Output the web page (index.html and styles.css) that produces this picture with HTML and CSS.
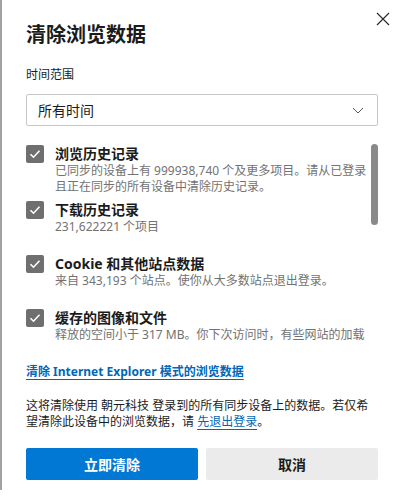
FILE: index.html
```html
<!DOCTYPE html>
<html lang="zh-CN">
<head>
<meta charset="utf-8">
<link rel="stylesheet" href="styles.css">
</head>
<body>
<div class="dialog">
  <button class="close" aria-label="关闭">
    <svg width="14" height="14" viewBox="0 0 14 14"><path d="M1 1L13 13M13 1L1 13" stroke="#2b2b2b" stroke-width="1.2" fill="none"/></svg>
  </button>
  <h1 class="title">清除浏览数据</h1>
  <div class="field-label">时间范围</div>
  <div class="select">
    <span>所有时间</span>
    <svg class="chev" width="12" height="7" viewBox="0 0 12 7"><path d="M1 1L6 6L11 1" stroke="#555" stroke-width="1" fill="none"/></svg>
  </div>
  <div class="scroll">
    <div class="item">
      <span class="cb"><svg width="12" height="10" viewBox="0 0 12 10"><path d="M1.5 5.2L4.5 8.2L10.5 1.8" stroke="#fff" stroke-width="1.6" fill="none"/></svg></span>
      <div class="item-text">
        <div class="item-title">浏览历史记录</div>
        <div class="item-desc">已同步的设备上有 999938,740 个及更多项目。请从已登录且正在同步的所有设备中清除历史记录。</div>
      </div>
    </div>
    <div class="item">
      <span class="cb"><svg width="12" height="10" viewBox="0 0 12 10"><path d="M1.5 5.2L4.5 8.2L10.5 1.8" stroke="#fff" stroke-width="1.6" fill="none"/></svg></span>
      <div class="item-text">
        <div class="item-title">下载历史记录</div>
        <div class="item-desc">231,622221 个项目</div>
      </div>
    </div>
    <div class="item">
      <span class="cb"><svg width="12" height="10" viewBox="0 0 12 10"><path d="M1.5 5.2L4.5 8.2L10.5 1.8" stroke="#fff" stroke-width="1.6" fill="none"/></svg></span>
      <div class="item-text">
        <div class="item-title">Cookie 和其他站点数据</div>
        <div class="item-desc">来自 343,193 个站点。使你从大多数站点退出登录。</div>
      </div>
    </div>
    <div class="item">
      <span class="cb"><svg width="12" height="10" viewBox="0 0 12 10"><path d="M1.5 5.2L4.5 8.2L10.5 1.8" stroke="#fff" stroke-width="1.6" fill="none"/></svg></span>
      <div class="item-text">
        <div class="item-title">缓存的图像和文件</div>
        <div class="item-desc">释放的空间小于 317 MB。你下次访问时，有些网站的加载时间可能会更慢。</div>
      </div>
    </div>
    <div class="scrollbar"></div>
  </div>
  <a class="ie-link" href="#">清除 Internet Explorer 模式的浏览数据</a>
  <p class="note">这将清除使用 朝元科技 登录到的所有同步设备上的数据。若仅希望清除此设备中的浏览数据，请 <a href="#">先退出登录</a>。</p>
  <div class="actions">
    <button class="btn primary">立即清除</button>
    <button class="btn secondary">取消</button>
  </div>
</div>
</body>
</html>
```
FILE: styles.css
```css
* { box-sizing: border-box; }
html, body { margin: 0; padding: 0; background: #fff; }
body {
  font-family: "Noto Sans", "Noto Sans CJK SC", sans-serif;
  color: #1b1b1b;
}
.dialog {
  position: relative;
  height: 490px;
  border-left: 2px solid #a2a2a2;
  padding: 21px 23px 0 24px;
  display: flex;
  flex-direction: column;
}
.close {
  position: absolute;
  top: 12px;
  left: 374px;
  width: 14px;
  height: 14px;
  padding: 0;
  border: 0;
  background: none;
  display: flex;
}
.title {
  margin: 0;
  font-size: 20px;
  line-height: 28px;
  font-weight: 700;
  color: #1b1b1b;
}
.field-label {
  margin-top: 18px;
  font-size: 12px;
  line-height: 16px;
  color: #1b1b1b;
}
.select {
  margin-top: 11px;
  height: 32px;
  border: 1px solid #c8c8c8;
  border-radius: 2px;
  display: flex;
  align-items: center;
  justify-content: space-between;
  padding: 0 13px 0 11px;
  font-size: 14px;
  color: #1b1b1b;
}
.chev { margin-top: 1px; }
.scroll {
  position: relative;
  margin-top: 10px;
  height: 205px;
  overflow: hidden;
  padding: 9px 8px 0 0;
}
.item {
  display: flex;
  gap: 11px;
  min-height: 54px;
  padding-bottom: 6px;
}
.cb {
  flex: none;
  width: 18px;
  height: 18px;
  border-radius: 2px;
  background: #6f6f6f;
  display: flex;
  align-items: center;
  justify-content: center;
}
.item-text { flex: 1; min-width: 0; }
.item-title {
  font-size: 14px;
  line-height: 18px;
  font-weight: 700;
  color: #1b1b1b;
}
.item-desc {
  font-size: 12px;
  line-height: 16px;
  color: #727272;
}
.scrollbar {
  position: absolute;
  right: 0;
  top: 8px;
  width: 7px;
  height: 81px;
  border-radius: 4px;
  background: #8a8a8a;
}
.ie-link {
  margin-top: 22px;
  align-self: flex-start;
  font-size: 12px;
  line-height: 18px;
  font-weight: 700;
  color: #0067b8;
  text-decoration: underline;
  text-underline-offset: 3px;
}
.note {
  margin: 17px 0 0;
  font-size: 12px;
  line-height: 16px;
  color: #1b1b1b;
}
.note a {
  color: #0067b8;
  text-decoration: underline;
  text-underline-offset: 3px;
}
.actions {
  margin-top: 18px;
  display: flex;
  gap: 8px;
}
.btn {
  flex: 1;
  height: 32px;
  border: 0;
  border-radius: 2px;
  font-family: "Noto Sans", "Noto Sans CJK SC", sans-serif;
  font-size: 14px;
  font-weight: 700;
}
.primary { background: #0078d4; color: #fff; }
.secondary { background: #ebebeb; color: #1b1b1b; }
```
